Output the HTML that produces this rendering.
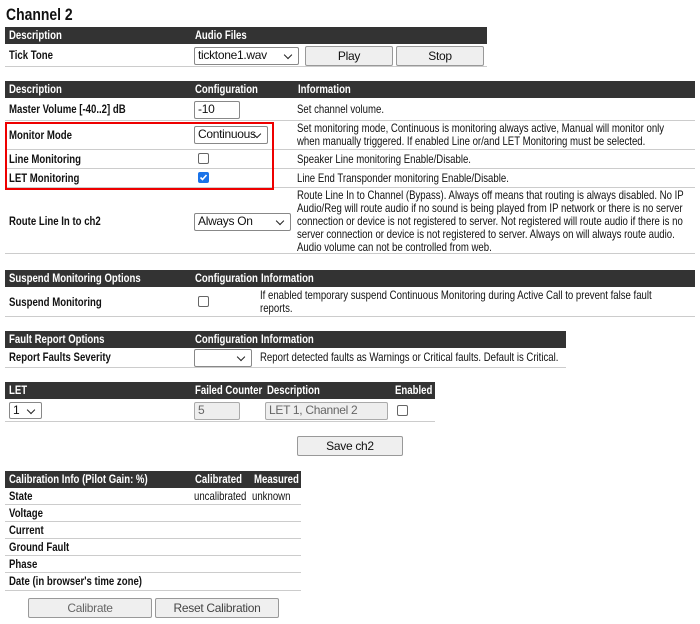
<!DOCTYPE html>
<html><head><meta charset="utf-8"><style>
*{box-sizing:border-box;margin:0;padding:0;white-space:nowrap}
body{width:700px;height:624px;background:#fff;position:relative;overflow:hidden;font-family:"Liberation Sans",sans-serif;font-size:12px;color:#111}
.a{position:absolute;transform:scaleX(.82);transform-origin:left top}
.h{position:absolute;background:#333;color:#fff;font-weight:bold;height:17px;line-height:17px}
.h span,.r span{position:absolute;transform:scaleX(.8);transform-origin:left top}
.r{position:absolute;border-bottom:1px solid #ccc}
.b{font-weight:bold}
.sel,.inp,.btn{position:absolute;border:1px solid #888;border-radius:2px;background:#fff;line-height:15px;padding-left:3px;font-size:12px;letter-spacing:-0.3px}
.sel:after{content:"";position:absolute;right:7px;top:4px;width:5px;height:5px;border-right:1.5px solid #222;border-bottom:1.5px solid #222;transform:rotate(45deg)}
.btn{background:#efefef;border-color:#999;text-align:center;padding:0;line-height:18px}
.cb{position:absolute;width:11px;height:11px;border:1px solid #666;border-radius:2px;background:#fff}
.cb.on{background:#1a73e8;border-color:#1a73e8}
.t{line-height:13px}
</style></head><body>
<div class="a b" style="left:6px;top:5px;font-size:17px">Channel 2</div>

<div class="h" style="left:5px;top:27px;width:482px"><span style="left:4px">Description</span><span style="left:190px">Audio Files</span></div>
<div class="r" style="left:5px;top:44px;width:482px;height:23px"><span class="b" style="left:4px;top:4px">Tick Tone</span></div>
<div class="sel" style="left:194px;top:47px;width:105px;height:18px">ticktone1.wav</div>
<div class="btn" style="left:305px;top:46px;width:88px;height:20px">Play</div>
<div class="btn" style="left:396px;top:46px;width:88px;height:20px">Stop</div>

<div class="h" style="left:5px;top:81px;width:690px"><span style="left:4px">Description</span><span style="left:190px">Configuration</span><span style="left:293px">Information</span></div>
<div class="r" style="left:5px;top:98px;width:690px;height:23px"><span class="b" style="left:4px;top:4px">Master Volume [-40..2] dB</span><span style="left:292px;top:4px">Set channel volume.</span></div>
<div class="inp" style="left:194px;top:101px;width:46px;height:18px">-10</div>
<div class="r" style="left:5px;top:121px;width:690px;height:29px"><span class="b" style="left:4px;top:7px">Monitor Mode</span><span class="t" style="left:292px;top:1px">Set monitoring mode, Continuous is monitoring always active, Manual will monitor only<br>when manually triggered. If enabled Line or/and LET Monitoring must be selected.</span></div>
<div class="sel" style="left:194px;top:126px;width:74px;height:18px">Continuous</div>
<div class="r" style="left:5px;top:150px;width:690px;height:19px"><span class="b" style="left:4px;top:2px">Line Monitoring</span><span style="left:292px;top:2px">Speaker Line monitoring Enable/Disable.</span></div>
<div class="cb" style="left:198px;top:153px"></div>
<div class="r" style="left:5px;top:169px;width:690px;height:19px"><span class="b" style="left:4px;top:2px">LET Monitoring</span><span style="left:292px;top:2px">Line End Transponder monitoring Enable/Disable.</span></div>
<div class="cb on" style="left:198px;top:172px"><svg width="9" height="9" style="position:absolute;left:0;top:0"><path d="M1.5 4.5l2 2 4-4.5" stroke="#fff" stroke-width="1.6" fill="none"/></svg></div>
<div class="r" style="left:5px;top:188px;width:690px;height:66px"><span class="b" style="left:4px;top:26px">Route Line In to ch2</span><span class="t" style="left:292px;top:1px">Route Line In to Channel (Bypass). Always off means that routing is always disabled. No IP<br>Audio/Reg will route audio if no sound is being played from IP network or there is no server<br>connection or device is not registered to server. Not registered will route audio if there is no<br>server connection or device is not registered to server. Always on will always route audio.<br>Audio volume can not be controlled from web.</span></div>
<div class="sel" style="left:194px;top:213px;width:97px;height:18px">Always On</div>
<div style="position:absolute;left:5px;top:122px;width:269px;height:68px;border:2px solid #e00"></div>

<div class="h" style="left:5px;top:270px;width:690px"><span style="left:4px">Suspend Monitoring Options</span><span style="left:190px">Configuration</span><span style="left:256px">Information</span></div>
<div class="r" style="left:5px;top:287px;width:690px;height:30px"><span class="b" style="left:4px;top:8px">Suspend Monitoring</span><span class="t" style="left:255px;top:2px">If enabled temporary suspend Continuous Monitoring during Active Call to prevent false fault<br>reports.</span></div>
<div class="cb" style="left:198px;top:296px"></div>

<div class="h" style="left:5px;top:331px;width:561px"><span style="left:4px">Fault Report Options</span><span style="left:190px">Configuration</span><span style="left:256px">Information</span></div>
<div class="r" style="left:5px;top:348px;width:561px;height:20px"><span class="b" style="left:4px;top:2px">Report Faults Severity</span><span style="left:255px;top:2px">Report detected faults as Warnings or Critical faults. Default is Critical.</span></div>
<div class="sel" style="left:194px;top:349px;width:58px;height:18px"></div>

<div class="h" style="left:5px;top:382px;width:430px"><span style="left:4px">LET</span><span style="left:190px">Failed Counter</span><span style="left:262px">Description</span><span style="left:390px">Enabled</span></div>
<div class="r" style="left:5px;top:399px;width:430px;height:23px"></div>
<div class="sel" style="left:9px;top:402px;width:33px;height:17px">1</div>
<div class="inp" style="left:194px;top:402px;width:46px;height:18px;background:#eee;color:#666;border-color:#aaa">5</div>
<div class="inp" style="left:265px;top:402px;width:123px;height:18px;background:#eee;color:#666;border-color:#aaa">LET 1, Channel 2</div>
<div class="cb" style="left:397px;top:405px"></div>

<div class="btn" style="left:297px;top:436px;width:106px;height:20px">Save ch2</div>

<div class="h" style="left:5px;top:471px;width:296px"><span style="left:4px">Calibration Info (Pilot Gain: %)</span><span style="left:190px">Calibrated</span><span style="left:249px">Measured</span></div>
<div class="r" style="left:5px;top:488px;width:296px;height:17px"><span class="b" style="left:4px;top:1px">State</span><span style="left:189px;top:1px">uncalibrated</span><span style="left:247px;top:1px">unknown</span></div>
<div class="r" style="left:5px;top:505px;width:296px;height:17px"><span class="b" style="left:4px;top:1px">Voltage</span></div>
<div class="r" style="left:5px;top:522px;width:296px;height:17px"><span class="b" style="left:4px;top:1px">Current</span></div>
<div class="r" style="left:5px;top:539px;width:296px;height:17px"><span class="b" style="left:4px;top:1px">Ground Fault</span></div>
<div class="r" style="left:5px;top:556px;width:296px;height:17px"><span class="b" style="left:4px;top:1px">Phase</span></div>
<div class="r" style="left:5px;top:573px;width:296px;height:18px"><span class="b" style="left:4px;top:1px">Date (in browser's time zone)</span></div>
<div class="btn" style="left:28px;top:598px;width:124px;height:20px;color:#666">Calibrate</div>
<div class="btn" style="left:155px;top:598px;width:124px;height:20px;color:#444">Reset Calibration</div>
</body></html>
